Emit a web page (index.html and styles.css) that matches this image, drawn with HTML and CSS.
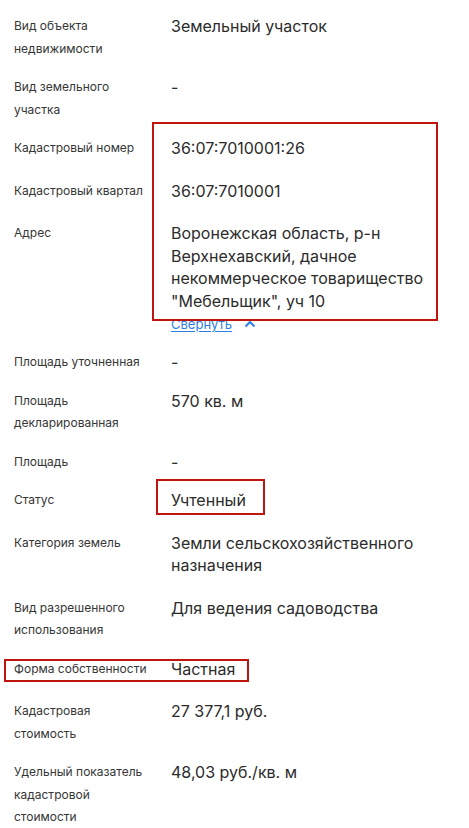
FILE: index.html
```html
<!DOCTYPE html>
<html lang="ru">
<head>
<meta charset="utf-8">
<title>Сведения об объекте</title>
<link rel="stylesheet" href="styles.css">
</head>
<body>
<div class="page">
  <dl class="props">
    <div class="row">
      <dt class="label">Вид объекта недвижимости</dt>
      <dd class="value">Земельный участок</dd>
    </div>
    <div class="row">
      <dt class="label">Вид земельного участка</dt>
      <dd class="value value--empty">-</dd>
    </div>
    <div class="row">
      <dt class="label">Кадастровый номер</dt>
      <dd class="value">36:07:7010001:26</dd>
    </div>
    <div class="row">
      <dt class="label">Кадастровый квартал</dt>
      <dd class="value">36:07:7010001</dd>
    </div>
    <div class="row">
      <dt class="label">Адрес</dt>
      <dd class="value value--expanded">
        <div class="value-text">Воронежская область, р-н Верхнехавский, дачное некоммерческое товарищество "Мебельщик", уч 10</div>
        <div class="toggle">
          <a class="toggle-link" href="#">Свернуть</a>
          <svg class="toggle-icon" width="12" height="8" viewBox="0 0 12 8" aria-hidden="true"><path d="M1.5 6.5 L6 2 L10.5 6.5" fill="none" stroke="#2f7fe8" stroke-width="2"/></svg>
        </div>
      </dd>
    </div>
    <div class="row">
      <dt class="label">Площадь уточненная</dt>
      <dd class="value value--empty">-</dd>
    </div>
    <div class="row">
      <dt class="label">Площадь декларированная</dt>
      <dd class="value">570 кв. м</dd>
    </div>
    <div class="row">
      <dt class="label">Площадь</dt>
      <dd class="value value--empty">-</dd>
    </div>
    <div class="row">
      <dt class="label">Статус</dt>
      <dd class="value">Учтенный</dd>
    </div>
    <div class="row">
      <dt class="label">Категория земель</dt>
      <dd class="value">Земли сельскохозяйственного назначения</dd>
    </div>
    <div class="row">
      <dt class="label">Вид разрешенного использования</dt>
      <dd class="value">Для ведения садоводства</dd>
    </div>
    <div class="row">
      <dt class="label">Форма собственности</dt>
      <dd class="value">Частная</dd>
    </div>
    <div class="row">
      <dt class="label">Кадастровая стоимость</dt>
      <dd class="value">27 377,1 руб.</dd>
    </div>
    <div class="row">
      <dt class="label">Удельный показатель кадастровой стоимости</dt>
      <dd class="value">48,03 руб./кв. м</dd>
    </div>
  </dl>
  <div class="mark mark--address"></div>
  <div class="mark mark--status"></div>
  <div class="mark mark--owner"></div>
</div>
</body>
</html>
```

FILE: styles.css
```css
html, body {
  margin: 0;
  padding: 0;
  background: #ffffff;
}

body {
  font-family: Inter, "Noto Sans", "Liberation Sans", sans-serif;
  color: #2b2b2b;
}

.page {
  position: relative;
  padding: 15px 0 0 14px;
}

.props {
  margin: 0;
}

.row {
  display: grid;
  grid-template-columns: 157px 1fr;
  align-items: start;
  margin-bottom: 16px;
}

.label {
  margin: 0;
  font-size: 12px;
  line-height: 22.5px;
  color: #363636;
  padding-right: 19px;
}

.value {
  margin: 0;
  font-size: 16px;
  line-height: 22.5px;
  color: #2b2b2b;
  padding-bottom: 4px;
  padding-right: 30px;
}

.value--empty {
  padding-bottom: 0;
}

.value--expanded {
  padding-bottom: 0;
}

.toggle {
  display: flex;
  align-items: center;
  gap: 12px;
  margin-top: 2px;
  height: 21px;
  line-height: 21px;
}

.toggle-link {
  font-size: 13px;
  color: #2f7fe8;
  text-decoration: underline;
  text-underline-offset: 2px;
}

.toggle-icon {
  display: block;
  margin-top: -2px;
}

.mark {
  position: absolute;
  border: 2px solid #c0140e;
  box-sizing: border-box;
}

.mark--address {
  left: 152px;
  top: 122px;
  width: 286px;
  height: 199px;
}

.mark--status {
  left: 156px;
  top: 479px;
  width: 109px;
  height: 36px;
}

.mark--owner {
  left: 4px;
  top: 659px;
  width: 245px;
  height: 23px;
}
```
